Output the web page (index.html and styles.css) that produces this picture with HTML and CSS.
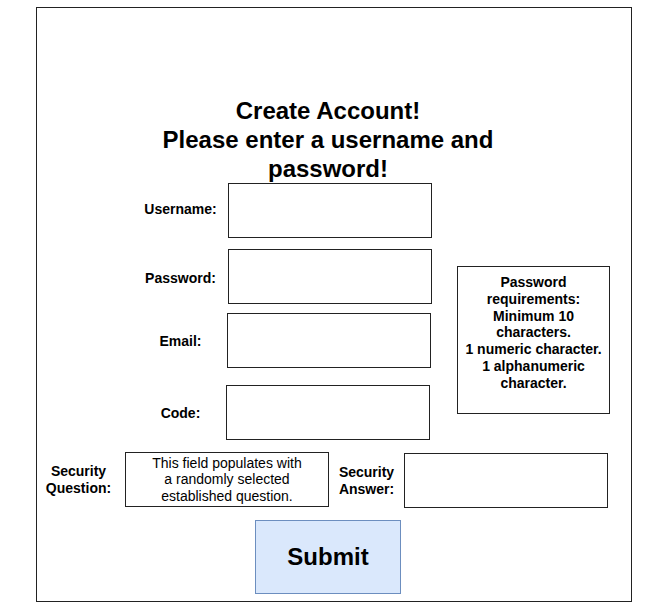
FILE: index.html
```html
<!DOCTYPE html>
<html lang="en">
<head>
    <meta charset="UTF-8">
    <meta name="viewport" content="width=device-width, initial-scale=1.0">
    <title>Create Account</title>
    <link rel="stylesheet" href="styles.css">
</head>
<body>
    <div class="frame">
        <h1 class="title">Create Account!<br>Please enter a username and password!</h1>

        <div class="form">
            <div class="fields">
                <div class="field username">
                    <label>Username:</label>
                    <div class="box"></div>
                </div>
                <div class="field password">
                    <label>Password:</label>
                    <div class="box"></div>
                </div>
                <div class="field email">
                    <label>Email:</label>
                    <div class="box"></div>
                </div>
                <div class="field code">
                    <label>Code:</label>
                    <div class="box"></div>
                </div>
            </div>
            <div class="requirements">
                Password requirements:<br>
                Minimum 10 characters.<br>
                1 numeric character.<br>
                1 alphanumeric character.
            </div>
        </div>

        <div class="security">
            <label class="sec-label q">Security Question:</label>
            <div class="box question">This field populates with a randomly selected established question.</div>
            <label class="sec-label a">Security Answer:</label>
            <div class="box answer"></div>
        </div>

        <div class="btn">Submit</div>
    </div>
</body>
</html>
```

FILE: styles.css
```css
body {
    margin: 0;
    font-family: 'Liberation Sans', Arial, sans-serif;
    color: #000;
    background: #fff;
}
.frame {
    box-sizing: border-box;
    width: 596px;
    height: 595px;
    margin: 7px 0 0 36px;
    border: 1px solid #222;
    padding-top: 88px;
}
.title {
    width: 340px;
    margin: 0 0 0 121px;
    font-size: 24px;
    line-height: 29px;
    font-weight: bold;
    text-align: center;
}
.form {
    display: flex;
    margin: 0 0 0 96px;
}
.fields {
    display: flex;
    flex-direction: column;
}
.field {
    display: flex;
    align-items: center;
}
.field label {
    width: 95px;
    text-align: center;
    font-size: 14px;
    font-weight: bold;
}
.box {
    box-sizing: border-box;
    width: 204px;
    height: 55px;
    border: 1px solid #222;
}
.field.username label { margin-top: -4px; }
.field.password label { margin-top: 2px; }
.field.password { margin-top: 11px; }
.field.email { margin-top: 9px; }
.field.email .box { margin-left: -1px; }
.field.code { margin-top: 17px; }
.field.code .box { margin-left: -2px; }
.requirements {
    box-sizing: border-box;
    width: 153px;
    height: 148px;
    margin: 83px 0 0 25px;
    padding: 7px 3px 0;
    border: 1px solid #222;
    font-size: 14px;
    font-weight: bold;
    line-height: 16.8px;
    text-align: center;
}
.security {
    display: flex;
    align-items: flex-start;
    margin-top: 12px;
}
.sec-label {
    margin-top: 11px;
    font-size: 14px;
    font-weight: bold;
    line-height: 17px;
    text-align: center;
}
.sec-label.q {
    width: 83px;
    margin-right: 5px;
}
.sec-label.a {
    width: 75px;
    margin-top: 12px;
}
.box.question {
    display: flex;
    align-items: center;
    justify-content: center;
    padding: 0 22px;
    font-size: 14px;
    line-height: 16.5px;
    text-align: center;
}
.box.answer {
    margin-top: 1px;
}
.btn {
    box-sizing: border-box;
    display: flex;
    align-items: center;
    justify-content: center;
    width: 146px;
    height: 74px;
    margin: 12px 0 0 218px;
    background: #dae8fc;
    border: 1px solid #6c8ebf;
    font-size: 24px;
    font-weight: bold;
}
```
